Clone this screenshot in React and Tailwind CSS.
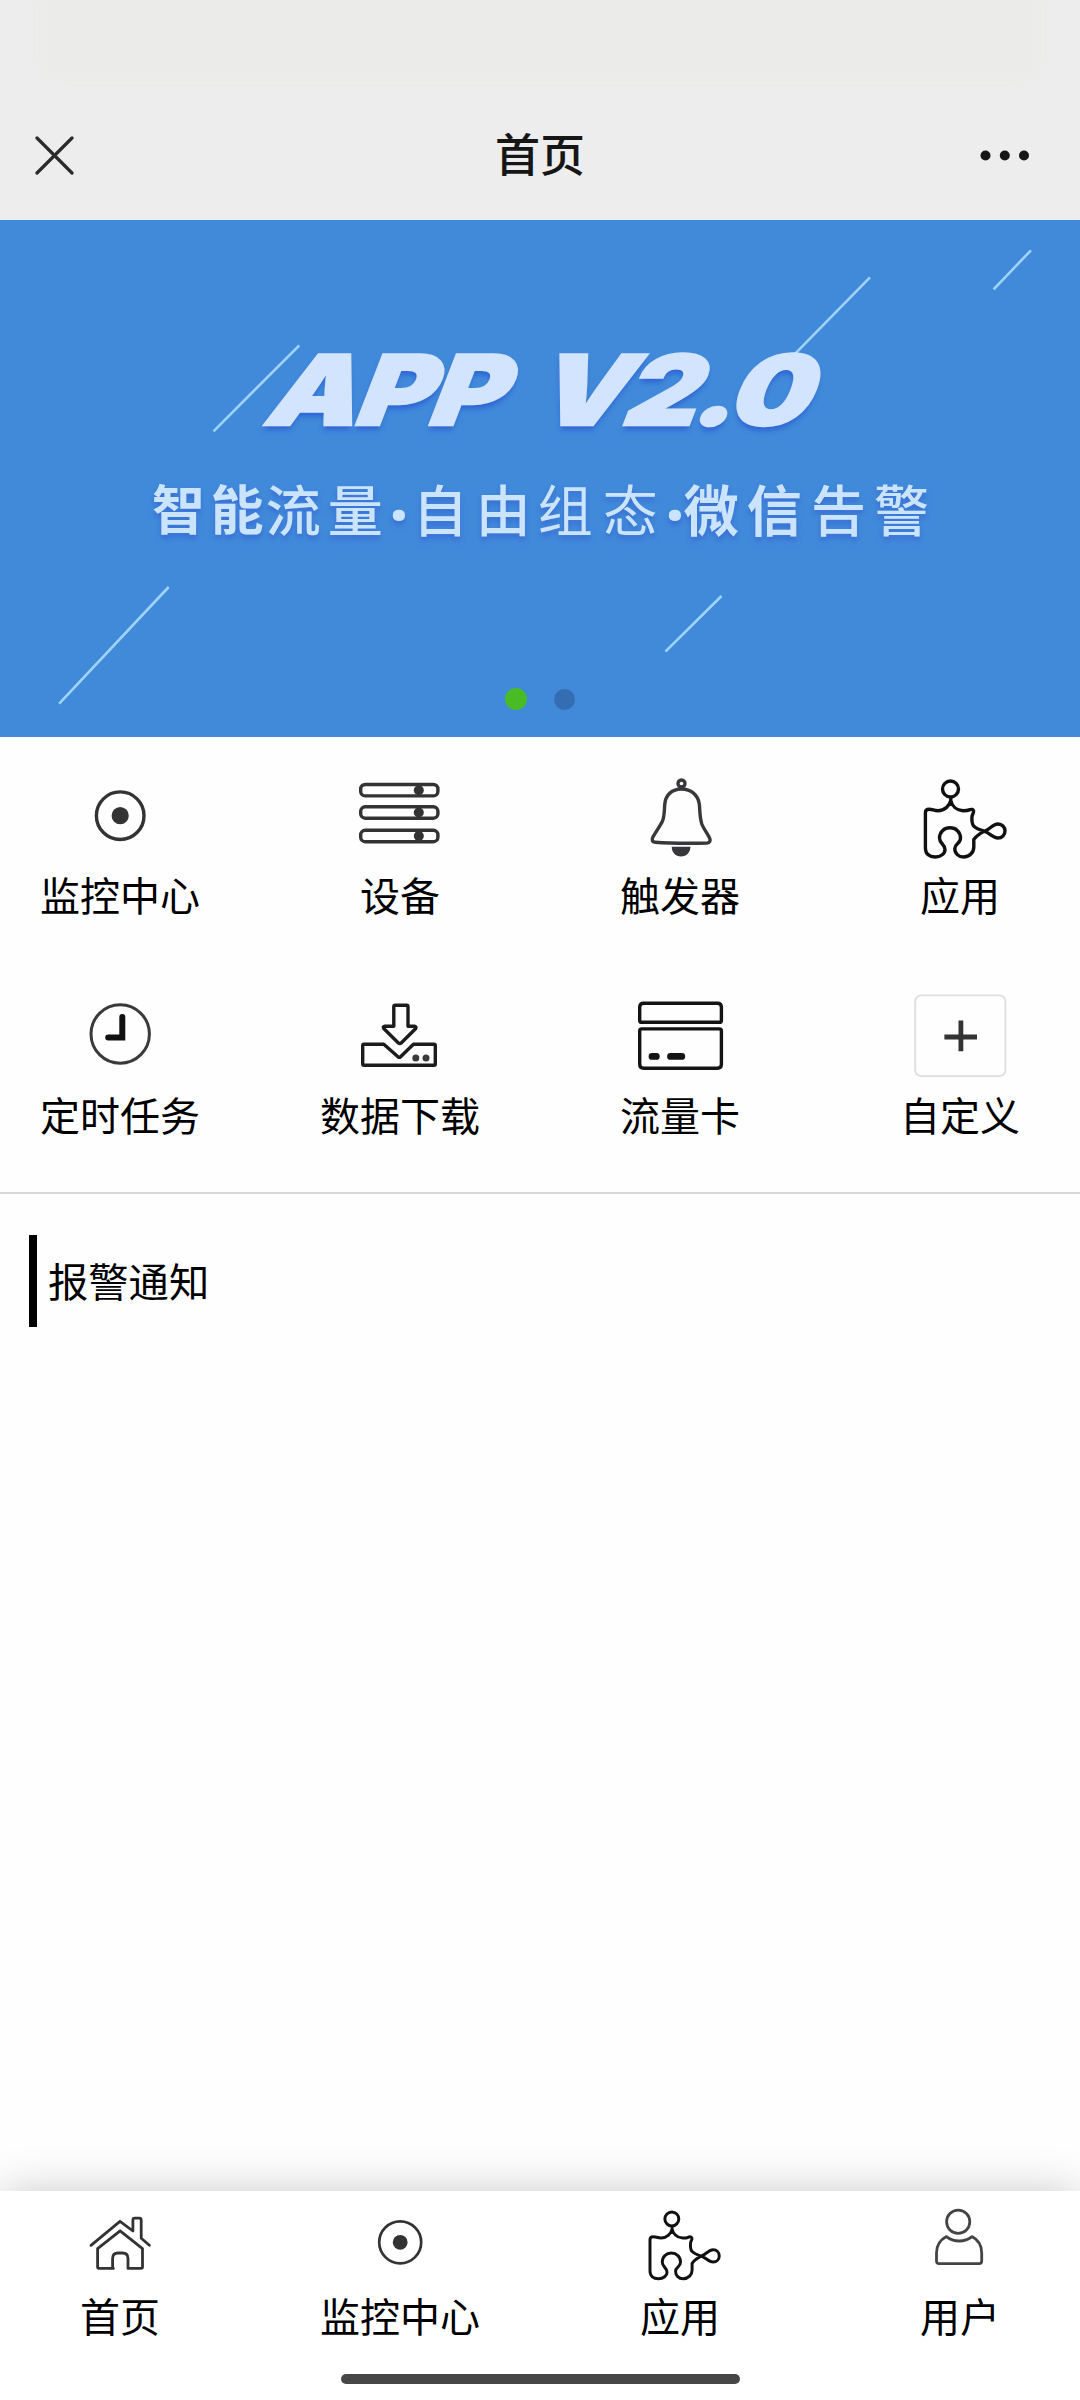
import React from 'react';
import { clsx } from 'clsx';

function Svg({ children, className }) {
  return (
    <svg
      viewBox="0 0 100 90"
      fill="none"
      stroke="currentColor"
      strokeWidth="3.4"
      strokeLinecap="round"
      strokeLinejoin="round"
      className={clsx('w-[100px] h-[90px] shrink-0', className)}
    >
      {children}
    </svg>
  );
}

function MonitorIcon() {
  return (
    <Svg className="text-[#333333]">
      <circle cx="50.2" cy="45.7" r="23.8" />
      <circle cx="50.2" cy="45.7" r="8.6" fill="currentColor" stroke="none" />
    </Svg>
  );
}

function DeviceIcon() {
  return (
    <Svg className="text-[#333333]">
      {[14.5, 36.8, 60.3].map((y) => (
        <g key={y}>
          <rect x="10.7" y={y} width="77.2" height="11.4" rx="4.5" />
          <circle cx="68.8" cy={y + 5.7} r="5" fill="currentColor" stroke="none" />
        </g>
      ))}
    </Svg>
  );
}

function BellIcon() {
  return (
    <Svg className="text-[#38383b]">
      <circle cx="51.5" cy="13.5" r="3.5" />
      <path d="M51.5 19C42 19 35.5 25 34.8 34C34.2 41 34.5 47 32.3 51.5C29.5 57 25 63 22.7 67.5C21.5 70.5 22.5 72 25 72.2C40 73.3 62 73.3 77 73C79.8 72.8 80.8 70.8 79.6 68C77 63 73.5 58.5 71.8 54C69.6 47 70 41 69.3 34C68 25 61 19 51.5 19Z" />
      <path d="M41.7 76.8H60.4C60.4 82.5 56.5 86.6 51 86.6S41.7 82.5 41.7 76.8Z" fill="currentColor" stroke="none" />
    </Svg>
  );
}

function PuzzleShape() {
  return (
    <>
      <circle cx="40.5" cy="19" r="8" />
      <path d="M40.8 27.5V30.5C39.5 36 34.5 40.7 28 40.7C24 40.7 22.5 39.2 19.2 39.2C16.5 39.2 15.4 40.2 15.4 42.5V78C15.4 84 19.5 87 25 87C31 87 35 83.5 35 79.5C35 74 29.5 74 29.5 68C29.5 62 34 57.8 40 57.8S50.5 62 50.5 68C50.5 74 44.8 73.5 44.8 78.5C44.8 83.5 48.5 87 53.5 87C59.5 87 63.8 82.5 63.8 77V69.5C67 65 71.5 62.5 76 60.5C80.5 58.5 83 54 88 54C92 54 95 57 95 61S92 68 88 68C83 68 80 63.5 75 61.5C70.5 60 66.5 59 63.5 55.8C61.5 53 61.8 49 62 46.5C62.3 44 63.8 43 63.6 41C63.3 39 61.5 39.2 60 39.6C57.5 40.8 55.5 40.8 53 40.8C46.5 40.2 42 36 40.8 30.5" />
    </>
  );
}

function PuzzleIcon() {
  return (
    <Svg className="text-[#111111]">
      <PuzzleShape />
    </Svg>
  );
}

function ClockIcon() {
  return (
    <Svg>
      <circle cx="50.2" cy="44" r="29.2" className="stroke-[#3a3a3a]" strokeWidth="3" />
      <path d="M52.3 27V47.6H38.2" className="stroke-[#111111]" strokeWidth="6" strokeLinejoin="miter" />
    </Svg>
  );
}

function DownloadIcon() {
  return (
    <Svg className="text-[#1c1c1c]">
      <path d="M45.5 15.3H56.5Q58 15.3 58 16.8V36.2H64.5Q66.8 36.6 65.5 38.8L51.2 53Q49.8 54.2 48.4 53L34 38.8Q32.4 36.6 34.8 36.2H43.8V16.8Q43.8 15.3 45.5 15.3Z" />
      <path d="M14 54.3H33.8L48 66.8Q49.3 67.8 50.6 66.8L63.4 54.3H84Q85.3 54.3 85.3 55.6V74Q85.3 75.3 84 75.3H14Q12.7 75.3 12.7 74V55.6Q12.7 54.3 14 54.3Z" />
      <circle cx="65.8" cy="68" r="3.5" fill="#3a3a3a" stroke="none" />
      <circle cx="76" cy="68" r="3.5" fill="#3a3a3a" stroke="none" />
    </Svg>
  );
}

function CardIcon() {
  return (
    <Svg className="text-[#141414]">
      <path d="M13.7 13.3H87.4Q91.4 13.3 91.4 17.3V30.4Q91.4 32.3 89.4 32.3H11.7Q9.7 32.3 9.7 30.4V17.3Q9.7 13.3 13.7 13.3Z" />
      <path d="M11.7 38.9H89.4Q91.4 38.9 91.4 40.9V74.2Q91.4 78.2 87.4 78.2H13.7Q9.7 78.2 9.7 74.2V40.9Q9.7 38.9 11.7 38.9Z" />
      <path d="M22 66.4H26.3M40.5 66.4H51.8" strokeWidth="6.8" />
    </Svg>
  );
}

function CustomIcon() {
  return (
    <Svg>
      <rect x="5.2" y="5.4" width="90.2" height="80.8" rx="6" className="stroke-[#dedede]" strokeWidth="1.8" />
      <path d="M34.4 47H67M50.9 30.4V61.2" className="stroke-[#333333]" strokeWidth="4.8" strokeLinecap="butt" />
    </Svg>
  );
}

function HomeIcon() {
  return (
    <Svg className="text-[#333333]">
      <g strokeWidth="2.8">
        <path d="M21 45.3L50 21.3L62.9 31V20Q62.9 18.2 64.7 18.2H69.4Q71.2 18.2 71.2 20V38.3L79.4 45.3" />
        <path d="M43.4 68.4H29Q27.6 68.4 27.6 67V48.6L50.1 30.8L72.5 48.6V67Q72.5 68.4 71 68.4H58V58.5Q58 53 52.5 53H48Q42.6 53 42.6 58.5V68.4" />
      </g>
    </Svg>
  );
}

function MonitorTabIcon() {
  return (
    <Svg className="text-[#333333]">
      <circle cx="50.2" cy="42.3" r="21" strokeWidth="2.7" />
      <circle cx="50.2" cy="42.3" r="7.4" fill="currentColor" stroke="none" />
    </Svg>
  );
}

function PuzzleTabIcon() {
  return (
    <Svg className="text-[#111111]">
      <g transform="translate(6.6 2.2) scale(.87 .88)">
        <PuzzleShape />
      </g>
    </Svg>
  );
}

function UserIcon() {
  return (
    <Svg className="text-[#444444]">
      <g strokeWidth="2.8">
        <circle cx="48.2" cy="21.8" r="11.6" />
        <path d="M36.4 36.6C30 40 26.5 46.5 26.5 53V61Q26.5 63.7 29.2 63.7H69Q71.7 63.7 71.7 61V53C71.7 46.5 68.5 40 62 36.6C58 39.8 53.5 41 49.2 41S40.4 39.8 36.4 36.6Z" />
      </g>
    </Svg>
  );
}

const menuItems = [
  { label: '监控中心', icon: MonitorIcon },
  { label: '设备', icon: DeviceIcon },
  { label: '触发器', icon: BellIcon },
  { label: '应用', icon: PuzzleIcon },
  { label: '定时任务', icon: ClockIcon },
  { label: '数据下载', icon: DownloadIcon },
  { label: '流量卡', icon: CardIcon },
  { label: '自定义', icon: CustomIcon },
];

const tabs = [
  { label: '首页', icon: HomeIcon },
  { label: '监控中心', icon: MonitorTabIcon },
  { label: '应用', icon: PuzzleTabIcon },
  { label: '用户', icon: UserIcon },
];

function Header() {
  return (
    <header className="relative h-[220px] bg-[#ededed] overflow-hidden">
      <div className="absolute -top-6 left-9 right-9 h-[108px] rounded-3xl bg-[#ebebea] blur-[6px]" />
      <div className="relative flex items-center justify-between h-full pl-[35px] pr-[50px] pt-[91px]">
        <svg viewBox="0 0 40 40" className="w-10 h-10 mr-[25px]" stroke="#2b2b2b" strokeWidth="3.2" strokeLinecap="round">
          <path d="M2 2L37 37M37 2L2 37" />
        </svg>
        <h1 className="text-[45px] leading-[60px] font-medium text-[#161616] pb-[6px]">首页</h1>
        <svg viewBox="0 0 50 40" className="w-[50px] h-10" fill="#161616">
          <circle cx="5.5" cy="19.5" r="5" />
          <circle cx="24.8" cy="19.5" r="5" />
          <circle cx="44" cy="19.5" r="5" />
        </svg>
      </div>
    </header>
  );
}

function Banner() {
  return (
    <section className="relative h-[517px] bg-[#4189d9] overflow-hidden">
      <svg viewBox="0 0 1080 517" className="absolute inset-0 w-full h-full" stroke="#9fd3f8" strokeWidth="2.6">
        <path d="M213.5 211.3L299.3 125.3M59.2 483.7L168.7 367M794.2 134.7L870 57.3M993.6 69.3L1031 30.3M665.4 431.7L721.5 376" />
      </svg>
      <div className="relative flex flex-col h-full pt-[120px]">
        <h2 className="w-max flex gap-[28px] ml-[275px] origin-left scale-x-[1.19] -skew-x-[18deg] font-['Inter'] font-black text-[97px] leading-[100px] text-[#d3e4fe] [-webkit-text-stroke:2.4px_#d3e4fe] [text-shadow:1px_5px_5px_#2f66d6] whitespace-nowrap">
          <span className="tracking-[-2px]">APP</span>
          <span className="tracking-[-3.6px]">V2.0</span>
        </h2>
        <p className="flex items-center ml-[152px] mt-[30px] text-[55px] leading-[60px] font-medium text-[#cbe4fd] [text-shadow:0_4px_5px_#3a6fd6] whitespace-nowrap">
          <span className="font-bold text-[53px] tracking-[5.4px]">智能</span>
          <span className="tracking-[7px] -ml-[3px]">流量</span>
          <span className="w-[18px] flex justify-center pt-[14px] font-['Noto_Sans'] font-black text-[60px]">·</span>
          <span className="ml-[5px] tracking-[8px]">自由</span>
          <span className="tracking-[10px] -ml-[1px] font-normal">组态</span>
          <span className="w-[18px] -ml-[2px] flex justify-center pt-[14px] font-['Noto_Sans'] font-black text-[60px]">·</span>
          <span className="font-bold tracking-[8px]">微信</span>
          <span className="tracking-[8px] ml-[1px]">告警</span>
        </p>
      </div>
      <div className="absolute bottom-[27px] left-[505px] flex items-center gap-[27px]">
        <span className="w-[22px] h-[22px] rounded-full bg-[#49bb25]" />
        <span className="w-[21px] h-[21px] rounded-full bg-[#346db1]" />
      </div>
    </section>
  );
}

function Entry({ item, tab }) {
  const Icon = item.icon;
  return (
    <div className="w-40 flex flex-col items-center">
      <Icon />
      <span className={clsx('text-[40px] leading-[56px] whitespace-nowrap', tab ? '-mt-[3px]' : 'mt-[6px] mb-px')}>
        {item.label}
      </span>
    </div>
  );
}

export default function App() {
  return (
    <div className="w-[1080px] h-[2400px] flex flex-col overflow-hidden bg-[#fefefe] text-black font-['Noto_Sans_CJK_SC','Noto_Sans',sans-serif]">
      <Header />
      <Banner />

      <section className="grid grid-cols-[repeat(4,160px)] justify-between content-start gap-y-[67px] px-10 pt-[33px] h-[457px] border-b-2 border-[#d8d8d8]">
        {menuItems.map((item) => (
          <Entry key={item.label} item={item} />
        ))}
      </section>

      <section className="flex-1">
        <h3 className="mt-[41px] ml-[29px] h-[92px] flex items-center border-l-8 border-black pl-[11px] pb-[2px] text-[40.3px] leading-[56px]">
          报警通知
        </h3>
      </section>

      <nav className="h-[209px] bg-white shadow-[0_0_42px_rgba(0,0,0,0.2)] flex flex-col">
        <div className="flex justify-between px-10 pt-[9px]">
          {tabs.map((item) => (
            <Entry key={item.label} item={item} tab />
          ))}
        </div>
        <div className="mt-auto mb-4 mx-auto w-[399px] h-[10px] rounded-full bg-[#474747]" />
      </nav>
    </div>
  );
}
